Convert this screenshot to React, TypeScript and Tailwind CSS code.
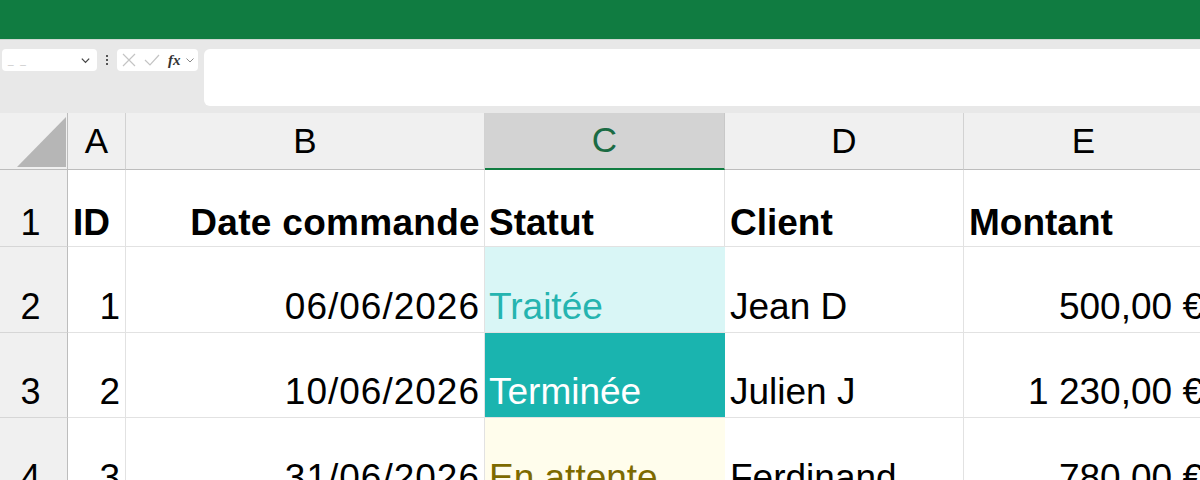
import React from 'react';

const COLS = ['A', 'B', 'C', 'D', 'E'];

type Row = {
  n: number;
  id: string;
  date: string;
  statut: string;
  statutCls: string;
  client: string;
  montant: string;
};

const ROWS: Row[] = [
  { n: 2, id: '1', date: '06/06/2026', statut: 'Traitée', statutCls: 'bg-[#d9f6f6] text-[#25b4b0]', client: 'Jean D', montant: '500,00 €' },
  { n: 3, id: '2', date: '10/06/2026', statut: 'Terminée', statutCls: 'bg-[#1ab4af] text-white', client: 'Julien J', montant: '1 230,00 €' },
  { n: 4, id: '3', date: '31/06/2026', statut: 'En attente', statutCls: 'bg-[#fffdec] text-[#7d6a00]', client: 'Ferdinand', montant: '780,00 €' },
];

const rowH = ['h-[86px]', 'h-[85px]', 'h-[86px]'];

const App: React.FC = () => {
  return (
    <div className="w-[1200px] h-[480px] overflow-hidden bg-white font-['Liberation_Sans',Arial,sans-serif] text-black">
      {/* Title bar */}
      <div className="h-[40px] bg-[#107c41] border-b border-[#cfd8d3]" />

      {/* Formula bar area */}
      <div className="h-[73px] bg-[#e8e8e8] flex items-start pt-[9px] pl-[2px]">
        <div className="w-[95px] h-[22px] bg-white rounded-[4px] flex items-center justify-between px-[6px]">
          <span className="text-[10px] text-[#c8c8c8] tracking-[2px]">_ _</span>
          <svg width="11" height="11" viewBox="0 0 12 12">
            <path d="M2 4 L6 8 L10 4" fill="none" stroke="#444" strokeWidth="1.4" />
          </svg>
        </div>
        <div className="w-[20px] h-[22px] flex flex-col items-center justify-center gap-[2px]">
          <span className="w-[2px] h-[2px] bg-[#555]" />
          <span className="w-[2px] h-[2px] bg-[#555]" />
          <span className="w-[2px] h-[2px] bg-[#555]" />
        </div>
        <div className="w-[81px] h-[22px] bg-white rounded-[4px] flex items-center pl-[5px] gap-[8px]">
          <svg width="14" height="14" viewBox="0 0 14 14">
            <path d="M1 1 L13 13 M13 1 L1 13" stroke="#c4c4c4" strokeWidth="1.2" />
          </svg>
          <svg width="16" height="14" viewBox="0 0 16 14">
            <path d="M1 7 L6 12 L15 2" fill="none" stroke="#c4c4c4" strokeWidth="1.2" />
          </svg>
          <span className="font-['Liberation_Serif',serif] italic font-bold text-[15px] text-[#333] leading-none -mr-[4px]">fx</span>
          <svg width="10" height="10" viewBox="0 0 10 10">
            <path d="M1.5 3.5 L5 7 L8.5 3.5" fill="none" stroke="#888" strokeWidth="1" />
          </svg>
        </div>
        <div className="ml-[6px] flex-1 h-[57px] bg-white rounded-l-[6px]" />
      </div>

      {/* Sheet */}
      <div className="grid grid-cols-[68px_58px_359px_240px_239px_240px]">
        {/* Column headers */}
        <div className="h-[57px] bg-[#f0f0f0] border-r border-b border-[#bdbdbd] relative">
          <svg className="absolute left-[17px] top-[4px]" width="50" height="50" viewBox="0 0 50 50">
            <polygon points="49,0 49,50 0,50" fill="#b6b6b6" />
          </svg>
        </div>
        {COLS.map((c) =>
          c === 'C' ? (
            <div key={c} className="h-[57px] bg-[#d3d3d3] border-r border-[#c8c8c8] border-b-2 border-b-[#107c41] flex items-center justify-center text-[35px] text-[#1b6b43]">
              {c}
            </div>
          ) : (
            <div key={c} className="h-[57px] bg-[#f0f0f0] border-r border-[#d2d2d2] border-b border-b-[#bdbdbd] flex items-center justify-center text-[35px]">
              {c}
            </div>
          )
        )}

        {/* Row 1: headers */}
        <div className="h-[77px] bg-[#f0f0f0] border-r border-[#bdbdbd] border-b border-b-[#d6d6d6] flex items-end justify-center pr-[6px] pb-[5px] text-[36px] leading-none">1</div>
        <div className="h-[77px] border-r border-b border-[#e2e2e2] flex items-end pl-[5px] pb-[5px] text-[37px] leading-none font-bold">ID</div>
        <div className="h-[77px] border-r border-b border-[#e2e2e2] flex items-end justify-end pr-[4px] pb-[5px] text-[37px] leading-none font-bold tracking-[0.3px]">Date commande</div>
        <div className="h-[77px] border-r border-b border-[#e2e2e2] flex items-end pl-[4px] pb-[5px] text-[37px] leading-none font-bold">Statut</div>
        <div className="h-[77px] border-r border-b border-[#e2e2e2] flex items-end pl-[5px] pb-[5px] text-[37px] leading-none font-bold">Client</div>
        <div className="h-[77px] border-b border-[#e2e2e2] flex items-end pl-[5px] pb-[5px] text-[37px] leading-none font-bold">Montant</div>

        {/* Data rows */}
        {ROWS.map((r, i) => (
          <React.Fragment key={r.n}>
            <div className={`${rowH[i]} bg-[#f0f0f0] border-r border-[#bdbdbd] border-b border-b-[#d6d6d6] flex items-end justify-center pr-[6px] pb-[7px] text-[36px] leading-none`}>{r.n}</div>
            <div className={`${rowH[i]} border-r border-b border-[#e2e2e2] flex items-end justify-end pr-[5px] pb-[7px] text-[37px] leading-none`}>{r.id}</div>
            <div className={`${rowH[i]} border-r border-b border-[#e2e2e2] flex items-end justify-end pr-[4px] pb-[7px] text-[37px] leading-none tracking-[1px]`}>{r.date}</div>
            <div className={`${rowH[i]} ${r.statutCls} border-b border-[#e2e2e2] flex items-end pl-[4px] pb-[7px] text-[37px] leading-none`}>{r.statut}</div>
            <div className={`${rowH[i]} border-r border-b border-[#e2e2e2] flex items-end pl-[5px] pb-[7px] text-[37px] leading-none`}>{r.client}</div>
            <div className={`${rowH[i]} border-b border-[#e2e2e2] flex items-end justify-end pr-[1px] pb-[7px] text-[37px] leading-none whitespace-nowrap`}>{r.montant}</div>
          </React.Fragment>
        ))}
      </div>
    </div>
  );
};

export default App;
